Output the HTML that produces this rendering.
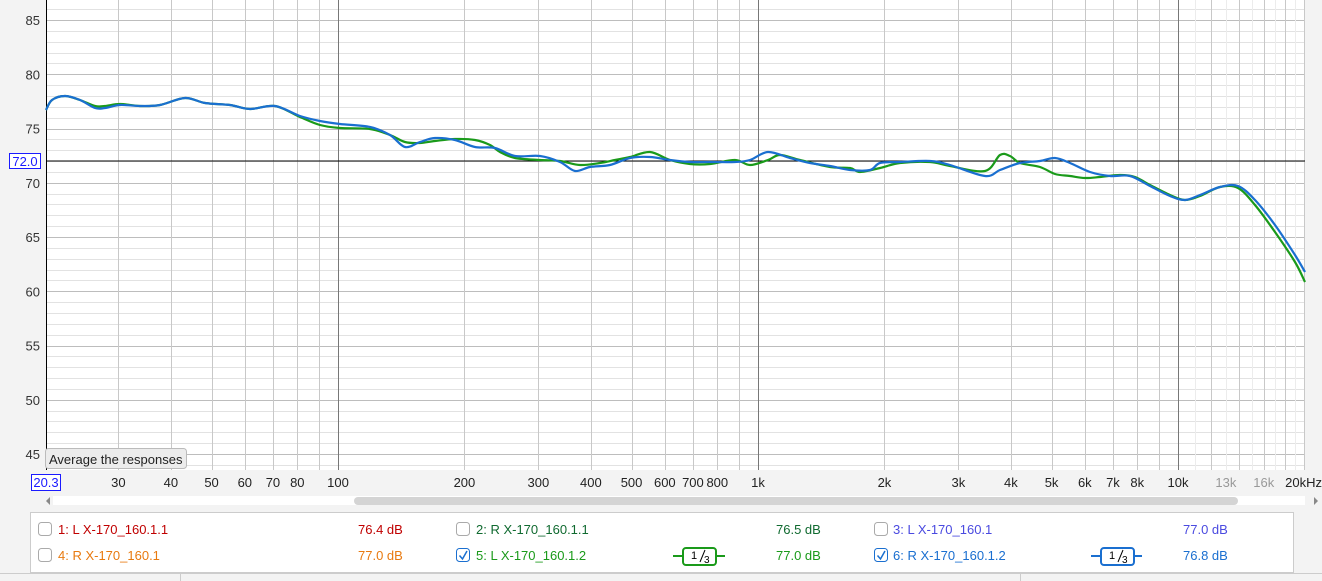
<!DOCTYPE html><html><head><style>
body{margin:0;width:1322px;height:581px;background:#f3f3f3;font-family:"Liberation Sans",sans-serif;overflow:hidden;position:relative}
.t{position:absolute;font-size:13px;white-space:nowrap}
</style></head><body>
<svg width="1322" height="581" style="position:absolute;left:0;top:0" font-family="Liberation Sans" font-size="13">
<rect x="46" y="0" width="1259" height="470" fill="#fff"/>
<g id="hg"></g><g id="vg"></g>
<g id="lab"></g>
<line x1="46" y1="161" x2="1305" y2="161" stroke="#000" stroke-width="1"/>
<line x1="46.5" y1="0" x2="46.5" y2="470" stroke="#000"/>
<path id="gc" fill="none" stroke="#1a9a1a" stroke-width="2.2"/>
<path id="bc" fill="none" stroke="#1a6fd0" stroke-width="2.2"/>
<rect x="31.5" y="474.5" width="29" height="16" fill="#fff" stroke="#1a1aff"/>
<text x="46" y="487" text-anchor="middle" fill="#1a1aff">20.3</text>
<rect x="9.5" y="153.5" width="31" height="15" fill="#fff" stroke="#1a1aff"/>
<text x="25" y="166" text-anchor="middle" fill="#1a1aff">72.0</text>
<rect x="45.5" y="448.5" width="141" height="20" rx="3" fill="#ececec" stroke="#bbb"/>
<text x="49" y="464" fill="#222">Average the responses</text>
<rect x="53" y="496" width="1252" height="9" fill="#fff"/>
<rect x="354" y="497" width="884" height="8" rx="4" fill="#d4d4d4"/>
<path d="M50 497 l-4 4 4 4z" fill="#888"/><path d="M1314 497 l4 4 -4 4z" fill="#888"/>
<rect x="30.5" y="512.5" width="1263" height="60" fill="#fff" stroke="#ccc"/>
<line x1="0" y1="573.5" x2="1322" y2="573.5" stroke="#ccc"/>
<line x1="180.5" y1="574" x2="180.5" y2="581" stroke="#ccc"/>
<line x1="1020.5" y1="574" x2="1020.5" y2="581" stroke="#ccc"/>
</svg>
<div class="t" style="left:58px;top:522px;color:#c00000">1: L X-170_160.1.1</div>
<div class="t" style="left:358px;top:522px;color:#c00000">76.4 dB</div>
<div class="t" style="left:476px;top:522px;color:#106a30">2: R X-170_160.1.1</div>
<div class="t" style="left:776px;top:522px;color:#106a30">76.5 dB</div>
<div class="t" style="left:893px;top:522px;color:#4a4ae0">3: L X-170_160.1</div>
<div class="t" style="left:1183px;top:522px;color:#4a4ae0">77.0 dB</div>
<div class="t" style="left:58px;top:548px;color:#e87a10">4: R X-170_160.1</div>
<div class="t" style="left:358px;top:548px;color:#e87a10">77.0 dB</div>
<div class="t" style="left:476px;top:548px;color:#1a9a1a">5: L X-170_160.1.2</div>
<div class="t" style="left:776px;top:548px;color:#1a9a1a">77.0 dB</div>
<div class="t" style="left:893px;top:548px;color:#1a6fd0">6: R X-170_160.1.2</div>
<div class="t" style="left:1183px;top:548px;color:#1a6fd0">76.8 dB</div>
<svg width="1322" height="581" style="position:absolute;left:0;top:0;pointer-events:none" font-family="Liberation Sans">
<g fill="#fff" stroke="#aaa"><rect x="38.5" y="522.5" width="13" height="13" rx="3"/><rect x="38.5" y="548.5" width="13" height="13" rx="3"/><rect x="456.5" y="522.5" width="13" height="13" rx="3"/><rect x="874.5" y="522.5" width="13" height="13" rx="3"/></g>
<g fill="#fff" stroke="#1a6fd0"><rect x="456.5" y="548.5" width="13" height="13" rx="3"/><rect x="874.5" y="548.5" width="13" height="13" rx="3"/></g>
<path d="M459.5 555.5 l3 3.5 4.5-8 M877.5 555.5 l3 3.5 4.5-8" fill="none" stroke="#1a6fd0" stroke-width="1.5"/>
<g stroke="#1a9a1a" stroke-width="2" fill="#fff"><line x1="673" y1="556" x2="725" y2="556"/><rect x="683" y="548" width="33" height="17" rx="3"/></g>
<text x="691" y="559" font-size="11">1</text><path d="M705 550 l-5 12" stroke="#000" stroke-width="1"/><text x="704" y="563" font-size="10">3</text>
<g stroke="#1a6fd0" stroke-width="2" fill="#fff"><line x1="1091" y1="556" x2="1142" y2="556"/><rect x="1101" y="548" width="33" height="17" rx="3"/></g>
<text x="1109" y="559" font-size="11">1</text><path d="M1123 550 l-5 12" stroke="#000" stroke-width="1"/><text x="1122" y="563" font-size="10">3</text>
</svg>
<script>
var ns="http://www.w3.org/2000/svg";
function el(g,t,a,txt){var e=document.createElementNS(ns,t);for(var k in a)e.setAttribute(k,a[k]);if(txt)e.textContent=txt;document.getElementById(g).appendChild(e);}
function Y(d){return 20+(85-d)*10.85;}
function X(f){return 338+420*Math.log10(f/100);}
for(var d=44;d<=86;d++){var y=Math.round(Y(d))+.5;el("hg","line",{x1:46,x2:1305,y1:y,y2:y,stroke:d%5==0?"#bdbdbd":"#e2e2e2"});}
for(var d=45;d<=85;d+=5){el("lab","text",{x:40,y:Y(d)+5,"text-anchor":"end",fill:"#333","font-size":13},""+d);}
var fs=[];for(var dec=10;dec<=10000;dec*=10)for(var m=1;m<10;m++)fs.push(dec*m);
var extra=[];for(var f=10000;f<=20000;f+=1000)extra.push(f);
fs.concat(extra).forEach(function(f){var x=Math.round(X(f))+.5;if(x<47||x>1306)return;var maj=(f==100||f==1000||f==10000);el("vg","line",{x1:x,x2:x,y1:0,y2:470,stroke:maj?"#777":(f>10000&&f%2000!=0&&f!=20000?"#ececec":"#c8c8c8")});});
[[30,"30"],[40,"40"],[50,"50"],[60,"60"],[70,"70"],[80,"80"],[100,"100"],[200,"200"],[300,"300"],[400,"400"],[500,"500"],[600,"600"],[700,"700"],[800,"800"],[1000,"1k"],[2000,"2k"],[3000,"3k"],[4000,"4k"],[5000,"5k"],[6000,"6k"],[7000,"7k"],[8000,"8k"],[10000,"10k"],[13000,"13k"],[16000,"16k"]].forEach(function(p){el("lab","text",{x:X(p[0]),y:487,"text-anchor":"middle",fill:(p[0]>10000?"#999":"#222"),"font-size":13},p[1]);});
el("lab","text",{x:1322,y:487,"text-anchor":"end",fill:"#222","font-size":13},"20kHz");
function spline(s){var p=s.trim().split(/\s+/).map(function(q){return q.split(",").map(Number)});var d="M"+p[0];for(var i=0;i<p.length-1;i++){var a=p[i-1]||p[i],b=p[i],c=p[i+1],e=p[i+2]||c;d+=" C"+(b[0]+(c[0]-a[0])/6)+","+(b[1]+(c[1]-a[1])/6)+" "+(c[0]-(e[0]-b[0])/6)+","+(c[1]-(e[1]-b[1])/6)+" "+c;}return d;}
document.getElementById("gc").setAttribute("d",spline("46,110 52,100 65,96 80,100 95,106 105,106 120,104 140,106 160,105 185,98 205,103 230,105 250,109 275,106 300,117 320,125 340,128 370,129 390,135 405,142 420,143 435,141 455,139 475,140 490,145 500,152 515,158 540,160 560,161 580,165 600,163 615,160 630,157 650,152 670,160 690,164 710,164 735,160 750,165 768,160 780,155 800,160 830,167 850,168 860,172 880,168 900,163 930,162 950,166 985,171 1000,155 1010,156 1020,163 1040,167 1055,174 1070,176 1085,178 1100,177 1120,175 1135,177 1150,185 1170,195 1185,200 1200,196 1220,187 1238,188 1255,205 1275,232 1295,262 1305,282"));
document.getElementById("bc").setAttribute("d",spline("46,110 52,100 65,96 80,100 95,108 105,108 120,105 140,106 160,105 185,98 205,103 230,105 250,109 275,106 300,116 320,121 340,124 370,127 390,135 405,147 420,142 435,138 455,140 475,147 495,148 515,156 540,156 560,162 575,171 590,167 610,165 630,158 650,157 670,160 690,162 710,162 735,162 750,160 768,152 790,158 810,163 830,166 850,170 870,170 880,163 900,162 930,161 950,165 985,176 1000,170 1020,163 1040,161 1055,158 1070,163 1090,172 1110,176 1130,176 1150,186 1170,196 1185,200 1200,195 1220,187 1238,186 1255,200 1275,225 1295,255 1305,272"));
</script>
</body></html>
